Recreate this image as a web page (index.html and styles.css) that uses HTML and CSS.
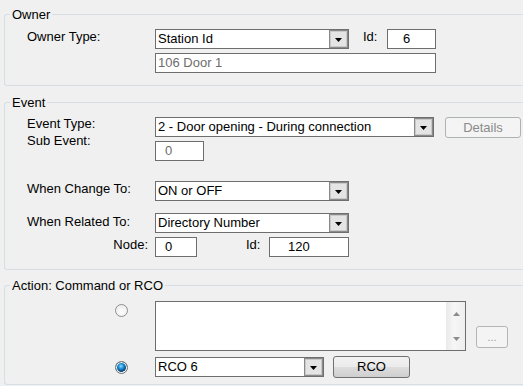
FILE: index.html
```html
<!DOCTYPE html>
<html>
<head>
<meta charset="utf-8">
<link rel="stylesheet" href="styles.css">
</head>
<body>
<fieldset class="group owner">
  <legend>Owner</legend>
  <div class="row">
    <div class="lbl">Owner Type:</div>
    <div class="combo w194"><span class="val">Station Id</span><span class="dd"><svg width="7" height="4" viewBox="0 0 7 4"><polygon points="0,0 7,0 3.5,4" fill="#000"/></svg></span></div>
    <div class="lbl2 idl">Id:</div>
    <div class="box w49 pad16">6</div>
  </div>
  <div class="row">
    <div class="lbl"></div>
    <div class="box w281 dis pad2">106 Door 1</div>
  </div>
</fieldset>

<fieldset class="group event">
  <legend>Event</legend>
  <div class="row">
    <div class="lbl up1">Event Type:</div>
    <div class="combo w279"><span class="val">2 - Door opening - During connection</span><span class="dd"><svg width="7" height="4" viewBox="0 0 7 4"><polygon points="0,0 7,0 3.5,4" fill="#000"/></svg></span></div>
    <div class="btn dis details">Details</div>
  </div>
  <div class="row">
    <div class="lbl up8">Sub Event:</div>
    <div class="box w49 dis pad10">0</div>
  </div>
  <div class="row gap20">
    <div class="lbl">When Change To:</div>
    <div class="combo w194"><span class="val">ON or OFF</span><span class="dd"><svg width="7" height="4" viewBox="0 0 7 4"><polygon points="0,0 7,0 3.5,4" fill="#000"/></svg></span></div>
  </div>
  <div class="row gap12">
    <div class="lbl dn1">When Related To:</div>
    <div class="combo w194"><span class="val">Directory Number</span><span class="dd"><svg width="7" height="4" viewBox="0 0 7 4"><polygon points="0,0 7,0 3.5,4" fill="#000"/></svg></span></div>
  </div>
  <div class="row">
    <div class="lbl right">Node:</div>
    <div class="box w42 pad10">0</div>
    <div class="lbl2 idl2">Id:</div>
    <div class="box w80 pad19">120</div>
  </div>
</fieldset>

<fieldset class="group action">
  <legend>Action: Command or RCO</legend>
  <div class="row tall">
    <div class="radiocell"><span class="radio"></span></div>
    <div class="memo">
      <div class="memotext"></div>
      <div class="sbar">
        <svg width="7" height="4" viewBox="0 0 7 4"><polygon points="0,4 7,4 3.5,0" fill="#8c8c8c"/></svg>
        <svg width="7" height="4" viewBox="0 0 7 4"><polygon points="0,0 7,0 3.5,4" fill="#8c8c8c"/></svg>
      </div>
    </div>
    <div class="btn dis dots">...</div>
  </div>
  <div class="row gap6">
    <div class="radiocell mid"><span class="radio on"></span></div>
    <div class="combo w169"><span class="val">RCO 6</span><span class="dd"><svg width="7" height="4" viewBox="0 0 7 4"><polygon points="0,0 7,0 3.5,4" fill="#000"/></svg></span></div>
    <div class="btn rco">RCO</div>
  </div>
</fieldset>
</body>
</html>
```

FILE: styles.css
```css
html, body {
  margin: 0;
  padding: 0;
  background: #f0f0f0;
  overflow: hidden;
}
body {
  padding-top: 7px;
  width: 523px;
  height: 386px;
  box-sizing: border-box;
  font-family: "Liberation Sans", Arial, sans-serif;
  font-size: 13px;
  color: #000;
}
.group {
  margin: 0 0 0 4px;
  width: 519px;
  box-sizing: border-box;
  border: 1px solid #d5dfe5;
  border-right: none;
  border-radius: 3px 0 0 3px;
  padding: 7px 0 12px 22px;
  min-width: 0;
}
.group legend {
  margin-left: -17px;
  padding: 0 2px;
  line-height: 15px;
  color: #000;
}
.event { margin-top: 9px; }
.action { margin-top: 8px; padding-top: 8px; padding-bottom: 7px; }

.row {
  display: flex;
  height: 20px;
  margin-top: 4px;
  align-items: flex-start;
}
.group legend + .row { margin-top: 0; }
.row.gap20 { margin-top: 20px; }
.row.gap12 { margin-top: 12px; }
.row.gap6 { margin-top: 6px; }
.row.tall { height: 50px; align-items: flex-end; }

.lbl {
  width: 121px;
  margin-right: 7px;
  line-height: 15px;
  white-space: nowrap;
  flex: none;
}
.lbl.up1 { margin-top: -1px; }
.lbl.up8 { margin-top: -8px; }
.lbl.dn1 { margin-top: 1px; }
.lbl.right { text-align: right; }
.lbl2 { line-height: 15px; flex: none; }
.idl { margin-left: 14px; width: 24px; }
.idl2 { margin-left: 49px; width: 23px; }

.combo, .box {
  height: 20px;
  box-sizing: border-box;
  border: 1px solid #6e6e6e;
  background: #fff;
  flex: none;
  line-height: 18px;
  white-space: nowrap;
  overflow: hidden;
}
.combo { display: flex; }
.combo .val { flex: 1; padding-left: 2px; overflow: hidden; }
.combo .dd {
  width: 19px;
  height: 18px;
  box-sizing: border-box;
  border: 1px solid #8a8a8a;
  box-shadow: inset 0 0 0 1px #c9c9c9;
  background: #e4e4e4;
  display: flex;
  align-items: center;
  justify-content: center;
  flex: none;
}
.combo .dd svg { display: block; margin-top: 1px; }

.w194 { width: 194px; }
.w279 { width: 279px; }
.w169 { width: 169px; }
.w49 { width: 49px; }
.w281 { width: 281px; }
.w42 { width: 42px; }
.w80 { width: 80px; }
.pad2 { padding-left: 2px; }
.pad10 { padding-left: 9px; }
.pad16 { padding-left: 15px; }
.pad19 { padding-left: 18px; }
.dis { color: #6d6d6d; }

.btn {
  box-sizing: border-box;
  border-radius: 3px;
  text-align: center;
  flex: none;
}
.btn.details {
  width: 76px;
  height: 21px;
  margin-left: 11px;
  border: 1px solid #adb2b5;
  background: #f4f4f4;
  color: #8b8b8b;
  line-height: 19px;
}
.btn.dots {
  width: 32px;
  height: 22px;
  margin-left: 10px;
  margin-bottom: 3px;
  border: 1px solid #b5b5b5;
  background: #f4f4f4;
  color: #9a9a9a;
  line-height: 20px;
  font-size: 11px;
}
.btn.rco {
  width: 77px;
  height: 22px;
  margin-left: 9px;
  margin-top: -1px;
  border: 1px solid #707070;
  background: linear-gradient(#f2f2f2 0%, #ebebeb 50%, #dddddd 51%, #cfcfcf 100%);
  line-height: 20px;
}

.radiocell {
  width: 128px;
  height: 100%;
  flex: none;
  display: flex;
  align-items: flex-start;
  padding-left: 88px;
  box-sizing: border-box;
}
.radiocell.mid { align-items: center; }
.row.tall .radiocell { padding-top: 3px; }
.radio {
  display: block;
  width: 13px;
  height: 13px;
  box-sizing: border-box;
  border-radius: 50%;
  border: 1px solid #8e8f8f;
  background: radial-gradient(circle at 50% 60%, #ffffff 0%, #f4f4f4 45%, #d8d8d8 100%);
  box-shadow: inset 0 0 0 1px #f4f4f4;
}
.radio.on {
  background:
    radial-gradient(circle at 45% 38%, #9fe2ff 0%, #2aa0e0 22%, #0c5e9e 48%, #0a3a66 62%, transparent 66%),
    radial-gradient(circle, #f6f6f6 0%, #e8e8e8 100%);
  border-color: #6f7070;
}

.memo {
  width: 311px;
  height: 50px;
  box-sizing: border-box;
  border: 1px solid #6e6e6e;
  background: #fff;
  display: flex;
  flex: none;
}
.memotext { flex: 1; }
.sbar {
  width: 19px;
  background: linear-gradient(90deg, #ebebeb, #f6f6f6 40%, #eeeeee);
  border-left: 1px solid #eaeaea;
  display: flex;
  flex-direction: column;
  justify-content: space-between;
  align-items: center;
  padding: 10px 0 9px;
  box-sizing: border-box;
}
.sbar svg { display: block; }
```
